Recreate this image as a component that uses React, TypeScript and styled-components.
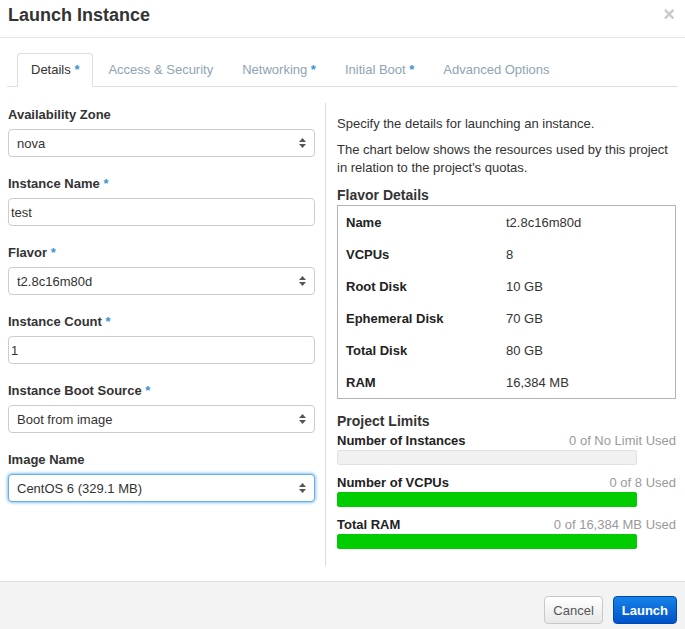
import * as React from 'react';
import styled, { createGlobalStyle } from 'styled-components';

const GlobalStyle = createGlobalStyle`
    html, body {
        margin: 0;
        padding: 0;
        background: #fff;
        overflow: hidden;
    }
    body {
        font-family: "Liberation Sans", Arial, sans-serif;
        font-size: 13px;
        color: #333;
    }
    * {
        box-sizing: border-box;
    }
`;

const Modal = styled.div`
    width: 685px;
    height: 629px;
    display: flex;
    flex-direction: column;
    overflow: hidden;
`;

const Header = styled.div`
    flex-shrink: 0;
    height: 38px;
    padding: 5px 10px 0 8px;
    border-bottom: 1px solid #e5e5e5;
    display: flex;
    justify-content: space-between;
    align-items: flex-start;
`;

const Title = styled.h4`
    margin: 0;
    font-size: 18px;
    line-height: 20px;
    font-weight: bold;
    color: #333;
`;

const Close = styled.button`
    border: 0;
    background: none;
    padding: 0;
    margin-top: -1px;
    font-family: "Liberation Sans", Arial, sans-serif;
    font-size: 20px;
    line-height: 20px;
    font-weight: bold;
    color: #c9c9c9;
    cursor: pointer;
`;

const TabList = styled.ul`
    flex-shrink: 0;
    list-style: none;
    margin: 15px 7px 0;
    padding: 0 0 0 10px;
    display: flex;
    border-bottom: 1px solid #ddd;
`;

const Tab = styled.li<{ $active?: boolean }>`
    height: 34px;
    line-height: 32px;
    padding: 0 13px;
    margin: 0 1px -1px 0;
    border: 1px solid transparent;
    border-radius: 4px 4px 0 0;
    color: ${(p) => (p.$active ? '#333' : '#8ea4b4')};
    ${(p) => p.$active && 'border-color: #ddd #ddd transparent; background: #fff;'}
`;

const Required = styled.span`
    color: #3c94cc;
    font-weight: bold;
`;

const Body = styled.div`
    flex-shrink: 0;
    display: grid;
    grid-template-columns: 318px 1fr;
    padding: 0 9px 0 8px;
    margin-top: 16px;
`;

const FormColumn = styled.div`
    padding: 4px 10px 0 0;
    border-right: 1px solid #ddd;
`;

const Field = styled.div`
    margin-bottom: 19px;
`;

const Label = styled.label`
    display: block;
    font-weight: bold;
    line-height: 16px;
    margin-bottom: 6px;
    color: #333;
`;

const TextInput = styled.input`
    display: block;
    width: 100%;
    height: 28px;
    padding: 0 2px;
    border: 1px solid #ccc;
    border-radius: 4px;
    font-family: "Liberation Sans", Arial, sans-serif;
    font-size: 13px;
    color: #333;
    outline: none;
`;

const SelectWrap = styled.div`
    position: relative;
`;

const Select = styled.select<{ $focused?: boolean }>`
    display: block;
    width: 100%;
    height: 28px;
    padding: 0 20px 0 8px;
    appearance: none;
    background: #fff;
    border: 1px solid ${(p) => (p.$focused ? '#6aaee8' : '#ccc')};
    border-radius: 4px;
    box-shadow: ${(p) => (p.$focused ? '0 0 3px 1px rgba(102, 175, 233, 0.75)' : 'none')};
    font-family: "Liberation Sans", Arial, sans-serif;
    font-size: 13px;
    color: #333;
    outline: none;
`;

const Arrows = styled.svg`
    position: absolute;
    right: 9px;
    top: 9px;
    pointer-events: none;
`;

const InfoColumn = styled.div`
    padding: 12px 0 8px 11px;
`;

const Text = styled.p`
    margin: 0 0 8px;
    line-height: 18px;
    color: #333;
`;

const SectionTitle = styled.h5<{ $top: number; $bottom: number }>`
    margin: ${(p) => p.$top}px 0 ${(p) => p.$bottom}px;
    font-size: 14px;
    line-height: 16px;
    font-weight: bold;
    color: #333;
`;

const FlavorTable = styled.div`
    border: 1px solid #b4b4b4;
`;

const FlavorRow = styled.div`
    display: grid;
    grid-template-columns: 160px 1fr;
    height: 32px;
    align-items: center;
    padding: 1px 0 0 8px;
`;

const FlavorKey = styled.span`
    font-weight: bold;
    color: #222;
`;

const FlavorValue = styled.span`
    color: #333;
`;

const Limit = styled.div`
    margin-bottom: 9px;
`;

const LimitHead = styled.div`
    display: flex;
    justify-content: space-between;
    line-height: 17px;
    margin-bottom: 1px;
`;

const LimitName = styled.span`
    font-weight: bold;
    color: #222;
`;

const LimitUsed = styled.span`
    color: #9a9a9a;
`;

const Bar = styled.div<{ $empty?: boolean }>`
    width: 300px;
    height: 15px;
    border-radius: 2px;
    background: ${(p) => (p.$empty ? '#f1f1f1' : '#00cc00')};
    border: 1px solid ${(p) => (p.$empty ? '#e2e2e2' : '#00cc00')};
`;

const Footer = styled.div`
    flex: 1 0 auto;
    margin-top: 15px;
    border-top: 1px solid #ddd;
    background: #f3f3f3;
    padding: 14px 8px 14px;
    display: flex;
    justify-content: flex-end;
    align-items: flex-start;
    gap: 10px;
`;

const Button = styled.button`
    height: 28px;
    padding: 0 8px;
    border-radius: 4px;
    font-family: "Liberation Sans", Arial, sans-serif;
    font-size: 13px;
`;

const CancelButton = styled(Button)`
    color: #555;
    background: linear-gradient(#ffffff, #e8e8e8);
    border: 1px solid #c8c8c8;
`;

const LaunchButton = styled(Button)`
    color: #fff;
    font-weight: bold;
    background: linear-gradient(#1683e8, #0052c9);
    border: 1px solid #0047b3;
`;

const tabs = [
    { name: 'Details', required: true },
    { name: 'Access & Security', required: false },
    { name: 'Networking', required: true },
    { name: 'Initial Boot', required: true },
    { name: 'Advanced Options', required: false },
];

const flavor = [
    ['Name', 't2.8c16m80d'],
    ['VCPUs', '8'],
    ['Root Disk', '10 GB'],
    ['Ephemeral Disk', '70 GB'],
    ['Total Disk', '80 GB'],
    ['RAM', '16,384 MB'],
];

const limits = [
    { name: 'Number of Instances', used: '0 of No Limit Used', empty: true },
    { name: 'Number of VCPUs', used: '0 of 8 Used', empty: false },
    { name: 'Total RAM', used: '0 of 16,384 MB Used', empty: false },
];

const SelectArrows = () => (
    <Arrows width="7" height="10" viewBox="0 0 7 10">
        <path d="M3.5 0 L7 4 L0 4 Z" fill="#555" />
        <path d="M0 6 L7 6 L3.5 10 Z" fill="#555" />
    </Arrows>
);

type SelectFieldProps = {
    label: string;
    value: string;
    required?: boolean;
    focused?: boolean;
};

const SelectField = ({ label, value, required, focused }: SelectFieldProps) => (
    <Field>
        <Label>
            {label} {required && <Required>*</Required>}
        </Label>
        <SelectWrap>
            <Select $focused={focused} defaultValue={value}>
                <option>{value}</option>
            </Select>
            <SelectArrows />
        </SelectWrap>
    </Field>
);

type InputFieldProps = {
    label: string;
    value: string;
};

const InputField = ({ label, value }: InputFieldProps) => (
    <Field>
        <Label>
            {label} <Required>*</Required>
        </Label>
        <TextInput defaultValue={value} />
    </Field>
);

export default function App() {
    return (
        <Modal>
            <GlobalStyle />
            <Header>
                <Title>Launch Instance</Title>
                <Close type="button">×</Close>
            </Header>

            <TabList>
                {tabs.map((t, i) => (
                    <Tab key={t.name} $active={i === 0}>
                        {t.name}
                        {t.required && (
                            <>
                                {' '}
                                <Required>*</Required>
                            </>
                        )}
                    </Tab>
                ))}
            </TabList>

            <Body>
                <FormColumn>
                    <SelectField label="Availability Zone" value="nova" />
                    <InputField label="Instance Name" value="test" />
                    <SelectField label="Flavor" value="t2.8c16m80d" required />
                    <InputField label="Instance Count" value="1" />
                    <SelectField label="Instance Boot Source" value="Boot from image" required />
                    <SelectField label="Image Name" value="CentOS 6 (329.1 MB)" focused />
                </FormColumn>

                <InfoColumn>
                    <Text>Specify the details for launching an instance.</Text>
                    <Text>
                        The chart below shows the resources used by this project in relation to the
                        project's quotas.
                    </Text>

                    <SectionTitle $top={10} $bottom={2}>
                        Flavor Details
                    </SectionTitle>
                    <FlavorTable>
                        {flavor.map(([k, v]) => (
                            <FlavorRow key={k}>
                                <FlavorKey>{k}</FlavorKey>
                                <FlavorValue>{v}</FlavorValue>
                            </FlavorRow>
                        ))}
                    </FlavorTable>

                    <SectionTitle $top={14} $bottom={3}>
                        Project Limits
                    </SectionTitle>
                    {limits.map((l) => (
                        <Limit key={l.name}>
                            <LimitHead>
                                <LimitName>{l.name}</LimitName>
                                <LimitUsed>{l.used}</LimitUsed>
                            </LimitHead>
                            <Bar $empty={l.empty} />
                        </Limit>
                    ))}
                </InfoColumn>
            </Body>

            <Footer>
                <CancelButton type="button">Cancel</CancelButton>
                <LaunchButton type="button">Launch</LaunchButton>
            </Footer>
        </Modal>
    );
}
